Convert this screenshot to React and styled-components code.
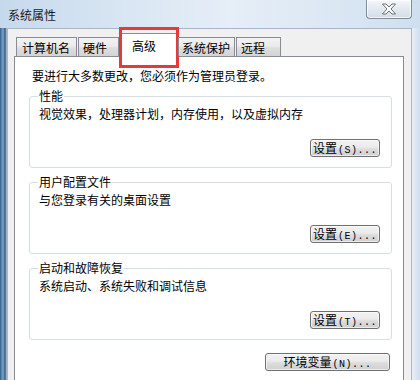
import styled, { createGlobalStyle } from 'styled-components';

const GlobalStyle = createGlobalStyle`
  html, body {
    margin: 0;
    padding: 0;
    overflow: hidden;
    background: #ffffff;
  }
  body {
    font-family: "Noto Sans CJK SC", "Liberation Sans", sans-serif;
    font-size: 12px;
    color: #000;
  }
`;

const tabs = [
  { name: '计算机名', w: 61, pl: 5 },
  { name: '硬件', w: 41, pl: 4 },
  { name: '高级', w: 58, pl: 11, active: true },
  { name: '系统保护', w: 57, pl: 3 },
  { name: '远程', w: 45, pl: 4 },
];

const groups = [
  { title: '性能', desc: '视觉效果，处理器计划，内存使用，以及虚拟内存', key: 'S' },
  { title: '用户配置文件', desc: '与您登录有关的桌面设置', key: 'E' },
  { title: '启动和故障恢复', desc: '系统启动、系统失败和调试信息', key: 'T' },
];

export default function App() {
  return (
    <>
      <GlobalStyle />
      <StWindow>
        <StTitleBar>
          <StTitle>系统属性</StTitle>
          <StClose>
            <svg width="18" height="12" viewBox="0 0 18 12">
              <path
                d="M2.5 1 H6 L9 4 L12 1 H15.5 L11 6 L15.5 11 H12 L9 8 L6 11 H2.5 L7 6 Z"
                fill="#ffffff"
                stroke="#6b6f74"
                strokeWidth="1"
                strokeLinejoin="round"
              />
            </svg>
          </StClose>
        </StTitleBar>

        <StFrame>
          <StClient>
            <StTabRow>
              {tabs.map((t) => (
                <StTab key={t.name} $w={t.w} $pl={t.pl} $active={t.active}>
                  {t.name}
                  {t.active && <StMark />}
                </StTab>
              ))}
            </StTabRow>

            <StPanel>
              <StIntro>要进行大多数更改，您必须作为管理员登录。</StIntro>
              {groups.map((g) => (
                <StGroup key={g.title}>
                  <StLegend>{g.title}</StLegend>
                  <StDesc>{g.desc}</StDesc>
                  <StButtonRow>
                    <StButton $w={70}>
                      设置<StKey>({g.key})...</StKey>
                    </StButton>
                  </StButtonRow>
                </StGroup>
              ))}
              <StFooter>
                <StButton $w={125}>
                  环境变量<StKey>(N)...</StKey>
                </StButton>
              </StFooter>
            </StPanel>
          </StClient>
        </StFrame>
      </StWindow>
    </>
  );
}

const StWindow = styled.div`
  width: 420px;
  height: 380px;
  display: flex;
  flex-direction: column;
  background: linear-gradient(180deg, #d2e2f1 0%, #c4d8ec 40%, #b9cfe6 100%);
`;

const StTitleBar = styled.div`
  height: 28px;
  display: flex;
  justify-content: space-between;
  align-items: flex-start;
  padding-left: 8px;
  background: linear-gradient(90deg, #c6d9ec 0%, #d9e6f3 30%, #e6eef7 55%, #dbe7f3 80%, #cfdfef 100%);
`;

const StTitle = styled.div`
  line-height: 30px;
  font-size: 12px;
  color: #1a1a1a;
`;

const StClose = styled.div`
  width: 44px;
  height: 18px;
  margin-right: 8px;
  display: flex;
  align-items: center;
  justify-content: center;
  border: 1px solid #7f8c99;
  border-top: none;
  border-radius: 0 0 4px 4px;
  background: linear-gradient(180deg, #f4f7fa 0%, #e3e9f0 50%, #d3dce6 100%);
  box-shadow: inset 0 0 0 1px rgba(255, 255, 255, 0.7);
`;

const StFrame = styled.div`
  flex: 1;
  display: flex;
  padding: 0 8px 0 7px;
  background: linear-gradient(90deg, #2f5f8e 0px, #7fa6cc 3px, #3b5c7a 5px, #b9cde3 7px) left / 8px 100% no-repeat,
    linear-gradient(90deg, #e9eff6, #cfdeee) right / 8px 100% no-repeat,
    #d4e2f0;
`;

const StClient = styled.div`
  flex: 1;
  display: flex;
  flex-direction: column;
  background: #f0f0f0;
  border: 1px solid #a9b8c8;
  border-bottom: none;
  padding: 4px 7px 0 6px;
`;

const StTabRow = styled.div`
  display: flex;
  align-items: flex-end;
  height: 24px;
  margin: 0 0 -1px 2px;
  position: relative;
  z-index: 1;
`;

const StTab = styled.div`
  position: relative;
  box-sizing: border-box;
  width: ${(p) => p.$w}px;
  height: ${(p) => (p.$active ? 24 : 19)}px;
  margin-bottom: ${(p) => (p.$active ? 0 : 1)}px;
  margin-right: ${(p) => (p.$active ? 0 : 1)}px;
  padding-left: ${(p) => p.$pl}px;
  border: 1px solid #898c95;
  border-bottom: none;
  line-height: ${(p) => (p.$active ? 24 : 19)}px;
  white-space: nowrap;
  background: ${(p) =>
    p.$active ? '#ffffff' : 'linear-gradient(180deg, #f3f3f3 0%, #ebebeb 45%, #dedede 55%, #d4d4d4 100%)'};
`;

const StMark = styled.span`
  position: absolute;
  top: -7px;
  left: -2px;
  right: -2px;
  bottom: -11px;
  border: 3px solid #e5393c;
  pointer-events: none;
`;

const StPanel = styled.div`
  flex: 1;
  background: #ffffff;
  border: 1px solid #898c95;
  border-bottom: none;
  padding: 12px 11px 0 14px;
`;

const StIntro = styled.div`
  line-height: 14px;
  margin: 0 0 6px 3px;
`;

const StGroup = styled.fieldset`
  margin: 0 0 7px 0;
  padding: 0 11px 10px 9px;
  border: 1px solid #d5dfe5;
  border-radius: 3px;
  min-inline-size: 0;
`;

const StLegend = styled.legend`
  padding: 0 1px;
  margin-left: -1px;
  line-height: 14px;
`;

const StDesc = styled.div`
  line-height: 14px;
  margin-top: 4px;
`;

const StButtonRow = styled.div`
  display: flex;
  justify-content: flex-end;
  margin-top: 18px;
`;

const StFooter = styled.div`
  display: flex;
  justify-content: flex-end;
  padding-right: 2px;
  margin-top: 13px;
`;

const StButton = styled.button`
  box-sizing: border-box;
  width: ${(p) => p.$w}px;
  height: 18px;
  padding: 0;
  font-family: inherit;
  font-size: 12px;
  line-height: 16px;
  color: #000;
  border: 1px solid #707070;
  border-radius: 3px;
  background: linear-gradient(180deg, #f2f2f2 0%, #ebebeb 45%, #dddddd 55%, #cfcfcf 100%);
  box-shadow: inset 0 0 0 1px rgba(255, 255, 255, 0.6);
`;

const StKey = styled.span`
  font-family: "Liberation Mono", monospace;
  font-size: 10px;
  letter-spacing: 0.5px;
  margin-left: 1px;
`;
